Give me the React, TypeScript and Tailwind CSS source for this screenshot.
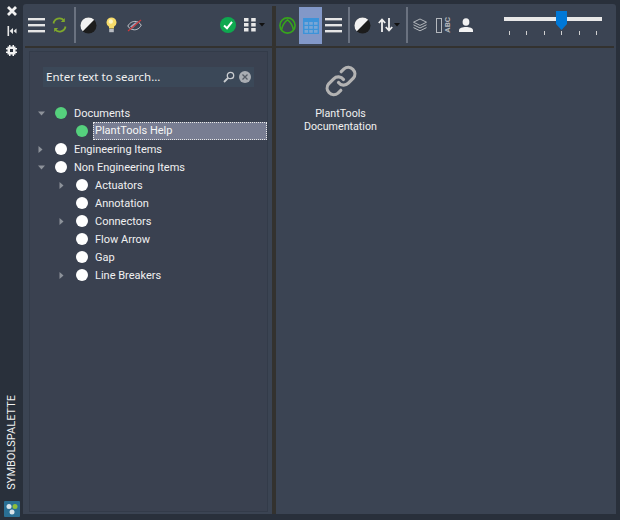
import { ReactNode } from 'react';

const Hamburger = () => (
    <svg width="17" height="15" viewBox="0 0 17 15" className="shrink-0">
        <rect x="0" y="0" width="17" height="2.4" fill="#e6e6e6" />
        <rect x="0" y="6" width="17" height="2.4" fill="#e6e6e6" />
        <rect x="0" y="12" width="17" height="2.4" fill="#e6e6e6" />
    </svg>
);

const HalfCircle = () => (
    <svg width="17" height="17" viewBox="0 0 17 17" className="shrink-0">
        <circle cx="8.5" cy="8.5" r="8" fill="#1c1c1c" />
        <path d="M2.8 14.2A8 8 0 0 1 14.2 2.8Z" fill="#f2f2f2" />
    </svg>
);

const Refresh = () => (
    <svg width="17" height="16" viewBox="0 0 17 16" fill="none" stroke="#7fa82c" strokeWidth="1.8" className="shrink-0">
        <path d="M2.5 6.5A6 6 0 0 1 13 3.6" />
        <path d="M14.5 9.5A6 6 0 0 1 4 12.4" />
        <path d="M13.8 1v4h-4z" fill="#7fa82c" stroke="none" />
        <path d="M3.2 15v-4h4z" fill="#7fa82c" stroke="none" />
    </svg>
);

const Bulb = () => (
    <svg width="11" height="16" viewBox="0 0 11 16" className="shrink-0">
        <path d="M5.5 0.5A5 5 0 0 1 8 9.8V11.5H3V9.8A5 5 0 0 1 5.5 0.5Z" fill="#f7dc6a" />
        <circle cx="4.8" cy="4.5" r="2.2" fill="#fff6c4" />
        <rect x="3.2" y="12" width="4.6" height="3.2" fill="#b9bcc2" />
    </svg>
);

const HiddenEye = () => (
    <svg width="15" height="13" viewBox="0 0 15 13" fill="none" className="shrink-0">
        <path d="M0.8 7C3 3.2 6 2.4 8 2.4S13 3.4 14.2 6.2C12.5 9.8 9.5 10.8 7.5 10.8S2.5 10 0.8 7Z" stroke="#c4c8ce" strokeWidth="1" />
        <path d="M3 7.5L8 3.6H11L5.5 9.4Z" fill="#9aa6bd" />
        <path d="M1 12L14 1" stroke="#d0393a" strokeWidth="1.1" />
    </svg>
);

const CheckBadge = () => (
    <svg width="16" height="16" viewBox="0 0 16 16" className="shrink-0">
        <circle cx="8" cy="8" r="8" fill="#0fa84f" />
        <path d="M4 8.4L7 11.2L12 4.8" fill="none" stroke="#fff" strokeWidth="2" />
    </svg>
);

const GridDots = () => (
    <svg width="12" height="14" viewBox="0 0 12 14" className="shrink-0">
        {[0, 5, 10].map((y) => (
            <g key={y}>
                <rect x="0" y={y} width="4.5" height="3.5" fill="#e8e8e8" />
                <rect x="7.2" y={y} width="4.5" height="3.5" fill="#e8e8e8" />
            </g>
        ))}
    </svg>
);

const Caret = () => (
    <svg width="6" height="4" viewBox="0 0 6 4" className="shrink-0">
        <path d="M0 0H6L3 3.5Z" fill="#111" />
    </svg>
);

const GreenRing = () => (
    <svg width="17" height="17" viewBox="0 0 17 17" fill="none" stroke="#37a51c" strokeWidth="1.6" className="shrink-0">
        <circle cx="8.5" cy="8.5" r="7.6" />
        <path d="M2.4 13.2C3.4 8.5 6 4.6 8.5 2.8C11 4.6 13.6 8.5 14.6 13.2" />
    </svg>
);

const TableIcon = () => (
    <svg width="16" height="16" viewBox="0 0 16 16" className="shrink-0">
        <rect width="16" height="16" fill="#3d93d9" />
        {[4, 8, 12].map((y) =>
            [1.5, 6.2, 11].map((x) => <rect key={`${x}-${y}`} x={x} y={y} width="3.6" height="2.8" fill="#79a6d6" />)
        )}
    </svg>
);

const SortArrows = () => (
    <svg width="15" height="14" viewBox="0 0 15 14" fill="none" stroke="#f0f0f0" strokeWidth="1.8" className="shrink-0">
        <path d="M4 14V1.5M0.8 5L4 1.5L7.2 5" />
        <path d="M11 0V12.5M7.8 9L11 12.5L14.2 9" />
    </svg>
);

const Layers = () => (
    <svg width="14" height="14" viewBox="0 0 14 14" fill="none" stroke="#b4b8bd" strokeWidth="1" className="shrink-0">
        <path d="M7 1L13.5 4.2L7 7.4L0.5 4.2Z" />
        <path d="M0.5 6.8L7 10L13.5 6.8" />
        <path d="M0.5 9.6L7 12.8L13.5 9.6" />
    </svg>
);

const AbcPanel = () => (
    <div className="flex h-[15px] w-[15px] shrink-0 items-center gap-[2px]">
        <div className="h-[15px] w-[7px] border-[1.5px] border-[#b4b8bd]" />
        <span className="rotate-180 text-[8px] leading-[7px] font-bold text-[#b4b8bd] [writing-mode:vertical-rl]">ABC</span>
    </div>
);

const Person = () => (
    <svg width="14" height="14" viewBox="0 0 14 14" className="shrink-0">
        <ellipse cx="7" cy="4" rx="3.4" ry="3.8" fill="#f2f2f2" />
        <path d="M0 14V12.2C0 10 3.5 9 7 9S14 10 14 12.2V14Z" fill="#f2f2f2" />
    </svg>
);

const LinkIcon = () => (
    <svg width="32" height="32" viewBox="0 0 32 32" fill="none" stroke="#b3b3b3" strokeWidth="3.2" strokeLinecap="round">
        <path d="M13.5 17.5a6.5 6.5 0 0 0 9.8 .7l5-5a6.6 6.6 0 0 0-9.3-9.3l-2.8 2.8" />
        <path d="M18.5 14.5a6.5 6.5 0 0 0-9.8-.7l-5 5a6.6 6.6 0 0 0 9.3 9.3l2.8-2.8" />
    </svg>
);

const Sep = () => <div className="h-[36px] w-[2px] shrink-0 bg-[#6a7280]" />;

const Dot = ({ green = false }: { green?: boolean }) => (
    <div className={`h-3 w-3 shrink-0 rounded-full ${green ? 'bg-[#55d07d]' : 'bg-white'}`} />
);

const Arrow = ({ open = false }: { open?: boolean }) =>
    open ? (
        <svg width="7" height="5" viewBox="0 0 7 5">
            <path d="M0 0.5H7L3.5 4.5Z" fill="#8d929a" />
        </svg>
    ) : (
        <svg width="5" height="7" viewBox="0 0 5 7">
            <path d="M0.5 0V7L4.5 3.5Z" fill="#8d929a" />
        </svg>
    );

interface TreeRowProps {
    label: string;
    level?: number;
    arrow?: 'open' | 'closed';
    green?: boolean;
    selected?: boolean;
}

function TreeRow({ label, level = 0, arrow, green, selected }: TreeRowProps) {
    return (
        <div className={`flex h-[18px] items-center ${level === 1 ? 'pl-[28px]' : 'pl-[7px]'}`}>
            <div className="flex w-[18px] shrink-0 items-center justify-start pl-px">
                {arrow && <Arrow open={arrow === 'open'} />}
            </div>
            <Dot green={green} />
            {selected ? (
                <div className="ml-[5px] flex h-[18px] flex-1 items-center border border-dotted border-[#e8e8e8] bg-[#787d92] pl-[1px] text-[#f5f5f5]">
                    {label}
                </div>
            ) : (
                <span className="ml-[7px] pt-[2px]">{label}</span>
            )}
        </div>
    );
}

function ToolbarRow({ children, className = '' }: { children: ReactNode; className?: string }) {
    return <div className={`flex h-[44px] shrink-0 items-center border-b-[2px] border-[#33322f] ${className}`}>{children}</div>;
}

export default function App() {
    const ticks = [0, 1, 2, 3, 4, 5];

    return (
        <div className="flex h-[520px] w-[620px] overflow-hidden bg-[#29303b] font-['Roboto',sans-serif] text-[11px] text-[#f0f0f0]">
            {/* Left palette strip */}
            <div className="flex w-[23px] shrink-0 flex-col items-center justify-between pt-[5px] pb-[3px]">
                <div className="flex flex-col items-center gap-[7px]">
                    <svg width="12" height="12" viewBox="0 0 12 12">
                        <path d="M2 2L10 10M10 2L2 10" stroke="#f2f2f2" strokeWidth="2.8" />
                    </svg>
                    <svg width="10" height="10" viewBox="0 0 10 10" className="my-[2px]">
                        <rect x="0.5" y="0" width="1.6" height="10" fill="#e8e8e8" />
                        <path d="M2.5 5L6 2V8Z" fill="#e8e8e8" />
                        <path d="M6.5 5L9.5 2.5V7.5Z" fill="#e8e8e8" />
                    </svg>
                    <svg width="11" height="11" viewBox="0 0 11 11" fill="#f2f2f2">
                        <path d="M3 0H4.5V1.5H6.5V0H8V1.5H9.5V3H11V4.5H9.5V6.5H11V8H9.5V9.5H8V11H6.5V9.5H4.5V11H3V9.5H1.5V8H0V6.5H1.5V4.5H0V3H1.5V1.5H3Z" />
                        <rect x="4" y="4" width="3" height="3" fill="#29303b" />
                    </svg>
                </div>
                <div className="flex flex-col items-center gap-[11px]">
                    <span className="rotate-180 text-[11px] leading-[14px] text-[#f0f0f0] [writing-mode:vertical-rl]">SYMBOLSPALETTE</span>
                    <svg width="16" height="16" viewBox="0 0 16 16">
                        <rect width="16" height="16" rx="1" fill="#2a6f94" />
                        <circle cx="5" cy="5.5" r="2.5" fill="#d9e4ea" />
                        <circle cx="11" cy="5.5" r="2.5" fill="#8fbf3a" />
                        <circle cx="8" cy="11" r="2.5" fill="#d9e4ea" />
                    </svg>
                </div>
            </div>

            {/* Main panel */}
            <div className="mt-[4px] mr-[4px] mb-[6px] flex min-w-0 flex-1 rounded-tl-[3px] rounded-tr-[3px] bg-[#3b4453]">
                {/* Left pane */}
                <div className="flex w-[249px] shrink-0 flex-col">
                    <ToolbarRow className="ml-[2px]">
                        <div className="ml-[3px] flex items-center">
                            <Hamburger />
                            <div className="ml-[6px]"><Refresh /></div>
                            <div className="ml-[6px]"><Sep /></div>
                            <div className="ml-[4px]"><HalfCircle /></div>
                            <div className="ml-[9px]"><Bulb /></div>
                            <div className="ml-[10px]"><HiddenEye /></div>
                            <div className="ml-[78px]"><CheckBadge /></div>
                            <div className="ml-[8px]"><GridDots /></div>
                            <div className="ml-[3px]"><Caret /></div>
                        </div>
                    </ToolbarRow>
                    <div className="mt-[3px] mr-[4px] mb-[2px] ml-[6px] flex-1 border border-[#333b49] bg-[#3a4150]">
                        <div className="mx-[13px] mt-[15px] flex h-[20px] items-center justify-between bg-[#3b4858] pr-[3px] pl-[3px]">
                            <span className="font-['Noto_Sans',sans-serif] text-[11.5px] text-[#f0f0f0]">Enter text to search...</span>
                            <div className="flex items-center gap-[4px]">
                                <svg width="12" height="12" viewBox="0 0 12 12" fill="none" stroke="#c9ccd0" strokeWidth="1.3">
                                    <circle cx="7.5" cy="4.5" r="3.2" />
                                    <path d="M5 7L1 11" strokeWidth="1.8" />
                                </svg>
                                <svg width="12" height="12" viewBox="0 0 12 12">
                                    <circle cx="6" cy="6" r="6" fill="#a9adb3" />
                                    <path d="M3.5 3.5L8.5 8.5M8.5 3.5L3.5 8.5" stroke="#565c66" strokeWidth="1.3" />
                                </svg>
                            </div>
                        </div>
                        <div className="mt-[17px]">
                            <TreeRow label="Documents" arrow="open" green />
                            <TreeRow label="PlantTools Help" level={1} green selected />
                            <TreeRow label="Engineering Items" arrow="closed" />
                            <TreeRow label="Non Engineering Items" arrow="open" />
                            <TreeRow label="Actuators" level={1} arrow="closed" />
                            <TreeRow label="Annotation" level={1} />
                            <TreeRow label="Connectors" level={1} arrow="closed" />
                            <TreeRow label="Flow Arrow" level={1} />
                            <TreeRow label="Gap" level={1} />
                            <TreeRow label="Line Breakers" level={1} arrow="closed" />
                        </div>
                    </div>
                </div>

                {/* Splitter */}
                <div className="mt-[2px] w-[4px] shrink-0 bg-[#33322f]" />

                {/* Right pane */}
                <div className="flex min-w-0 flex-1 flex-col">
                    <ToolbarRow className="mr-[2px]">
                        <div className="ml-[3px]"><GreenRing /></div>
                        <div className="mt-[3px] ml-[3px] flex h-[37px] w-[23px] items-center justify-center self-start bg-[#8298c8]"><TableIcon /></div>
                        <div className="ml-[3px]"><Hamburger /></div>
                        <div className="ml-[6px]"><Sep /></div>
                        <div className="ml-[4px]"><HalfCircle /></div>
                        <div className="ml-[7px]"><SortArrows /></div>
                        <div className="ml-[1px]"><Caret /></div>
                        <div className="ml-[6px]"><Sep /></div>
                        <div className="ml-[5px]"><Layers /></div>
                        <div className="ml-[9px]"><AbcPanel /></div>
                        <div className="ml-[8px]"><Person /></div>
                        <div className="relative ml-[31px] h-[42px] w-[98px] shrink-0">
                            <div className="mt-[13px] h-[4px] w-[98px] bg-[#e8e8e8]" />
                            <div className="mt-[10px] flex justify-between px-[5px]">
                                {ticks.map((t) => (
                                    <div key={t} className="h-[4px] w-px bg-[#d0d0d0]" />
                                ))}
                            </div>
                            <svg width="11" height="19" viewBox="0 0 11 19" className="absolute top-[7px] left-[52px]">
                                <path d="M0 0H11V13L5.5 19L0 13Z" fill="#0078d7" />
                            </svg>
                        </div>
                    </ToolbarRow>
                    <div className="mt-[17px] ml-[27px] flex w-[75px] flex-col items-center">
                        <LinkIcon />
                        <div className="mt-[10px] text-center text-[10.7px] leading-[13px] whitespace-nowrap">
                            PlantTools
                            <br />
                            Documentation
                        </div>
                    </div>
                </div>
            </div>
        </div>
    );
}
